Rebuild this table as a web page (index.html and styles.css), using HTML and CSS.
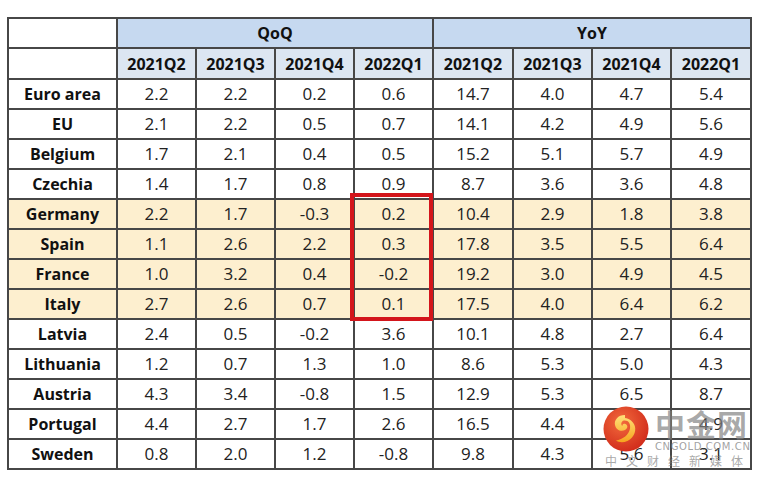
FILE: index.html
```html
<!DOCTYPE html>
<html>
<head>
<meta charset="utf-8">
<link rel="stylesheet" href="styles.css">
</head>
<body>
<div class="wrap">
  <table class="gdp">
    <colgroup>
      <col class="c-label">
      <col class="c79"><col class="c79"><col class="c79"><col class="c79">
      <col class="c80"><col class="c79"><col class="c79"><col class="c80">
    </colgroup>
    <thead>
      <tr class="h1">
        <th class="blank"></th>
        <th colspan="4">QoQ</th>
        <th colspan="4">YoY</th>
      </tr>
      <tr class="h2">
        <th class="blank"></th>
        <th>2021Q2</th><th>2021Q3</th><th>2021Q4</th><th>2022Q1</th>
        <th>2021Q2</th><th>2021Q3</th><th>2021Q4</th><th>2022Q1</th>
      </tr>
    </thead>
    <tbody>
      <tr><th>Euro area</th><td>2.2</td><td>2.2</td><td>0.2</td><td>0.6</td><td>14.7</td><td>4.0</td><td>4.7</td><td>5.4</td></tr>
      <tr><th>EU</th><td>2.1</td><td>2.2</td><td>0.5</td><td>0.7</td><td>14.1</td><td>4.2</td><td>4.9</td><td>5.6</td></tr>
      <tr><th>Belgium</th><td>1.7</td><td>2.1</td><td>0.4</td><td>0.5</td><td>15.2</td><td>5.1</td><td>5.7</td><td>4.9</td></tr>
      <tr><th>Czechia</th><td>1.4</td><td>1.7</td><td>0.8</td><td>0.9</td><td>8.7</td><td>3.6</td><td>3.6</td><td>4.8</td></tr>
      <tr class="hl"><th>Germany</th><td>2.2</td><td>1.7</td><td>-0.3</td><td>0.2</td><td>10.4</td><td>2.9</td><td>1.8</td><td>3.8</td></tr>
      <tr class="hl"><th>Spain</th><td>1.1</td><td>2.6</td><td>2.2</td><td>0.3</td><td>17.8</td><td>3.5</td><td>5.5</td><td>6.4</td></tr>
      <tr class="hl"><th>France</th><td>1.0</td><td>3.2</td><td>0.4</td><td>-0.2</td><td>19.2</td><td>3.0</td><td>4.9</td><td>4.5</td></tr>
      <tr class="hl"><th>Italy</th><td>2.7</td><td>2.6</td><td>0.7</td><td>0.1</td><td>17.5</td><td>4.0</td><td>6.4</td><td>6.2</td></tr>
      <tr><th>Latvia</th><td>2.4</td><td>0.5</td><td>-0.2</td><td>3.6</td><td>10.1</td><td>4.8</td><td>2.7</td><td>6.4</td></tr>
      <tr><th>Lithuania</th><td>1.2</td><td>0.7</td><td>1.3</td><td>1.0</td><td>8.6</td><td>5.3</td><td>5.0</td><td>4.3</td></tr>
      <tr><th>Austria</th><td>4.3</td><td>3.4</td><td>-0.8</td><td>1.5</td><td>12.9</td><td>5.3</td><td>6.5</td><td>8.7</td></tr>
      <tr><th>Portugal</th><td>4.4</td><td>2.7</td><td>1.7</td><td>2.6</td><td>16.5</td><td>4.4</td><td>4.9</td><td>4.9</td></tr>
      <tr><th>Sweden</th><td>0.8</td><td>2.0</td><td>1.2</td><td>-0.8</td><td>9.8</td><td>4.3</td><td>5.6</td><td>3.1</td></tr>
    </tbody>
  </table>
  <div class="redbox"></div>
  <div class="watermark">
    <svg class="wm-logo" width="46" height="46" viewBox="0 0 46 46">
      <defs>
        <radialGradient id="g1" cx="40%" cy="35%" r="70%">
          <stop offset="0" stop-color="#f26a3c"/>
          <stop offset="1" stop-color="#d02a1a"/>
        </radialGradient>
        <linearGradient id="g2" x1="0" y1="0" x2="0" y2="1">
          <stop offset="0" stop-color="#ffe27a"/>
          <stop offset="1" stop-color="#f6a41e"/>
        </linearGradient>
      </defs>
      <circle cx="23" cy="23" r="22.5" fill="url(#g1)"/>
      <path d="M22 9c-7 0-11 5-10 10 1 5 6 7 10 5 3-1.5 3-5 .5-6-2-.8-3.5.6-3 2-2-1-1.5-5 1.5-5.5 4-.6 7 3 6 8-1 6-7 11-14 12 4 3 12 2 16-3 5-6 4-13-1-17-2-1.5-4-2.5-6-2.5z" fill="url(#g2)"/>
    </svg>
    <div class="wm-text">
      <div class="wm-big">中金网</div>
      <div class="wm-url">CNGOLD.COM.CN</div>
    </div>
    <div class="wm-sub">中文财经新媒体</div>
  </div>
</div>
</body>
</html>
```

FILE: styles.css
```css
html, body {
  margin: 0;
  padding: 0;
  background: #ffffff;
}
.wrap {
  position: relative;
  padding: 17px 0 0 7px;
  width: 760px;
  height: 478px;
  box-sizing: border-box;
}
.gdp {
  border-collapse: collapse;
  table-layout: fixed;
  width: 743px;
  font-family: "Open Sans", "Noto Sans", sans-serif;
  color: #1a1a1a;
}
.c-label { width: 109px; }
.c79 { width: 79px; }
.c80 { width: 80px; }
.gdp th, .gdp td {
  border: 2px solid #474747;
  height: 28px;
  padding: 0;
  text-align: center;
  vertical-align: middle;
  line-height: 24px;
}
.gdp th {
  font-size: 16px;
  font-weight: 700;
  color: #111;
}
.gdp td {
  font-size: 17px;
  font-weight: 400;
  color: #222;
}
.h1 th {
  background: #c6d9f0;
  height: 28px;
}
.h2 th {
  background: #dce6f2;
  height: 29px;
}
.gdp th.blank {
  background: #ffffff;
}
.hl th, .hl td {
  background: #fdefcf;
}
.redbox {
  position: absolute;
  left: 350px;
  top: 193px;
  width: 83px;
  height: 128px;
  box-sizing: border-box;
  border: 4px solid #d3151b;
}
.watermark {
  position: absolute;
  left: 603px;
  top: 405px;
  width: 150px;
  height: 70px;
}
.wm-logo {
  position: absolute;
  left: 0;
  top: 1px;
}
.wm-text {
  position: absolute;
  left: 52px;
  top: 0;
}
.wm-big {
  font-family: "Noto Sans CJK SC", sans-serif;
  font-size: 30px;
  font-weight: 700;
  line-height: 36px;
  color: rgba(130, 130, 130, 0.7);
  letter-spacing: 1px;
}
.wm-url {
  font-family: "DejaVu Sans", sans-serif;
  font-size: 10px;
  line-height: 12px;
  letter-spacing: 0.6px;
  color: rgba(130, 130, 130, 0.75);
}
.wm-sub {
  position: absolute;
  left: 2px;
  top: 49px;
  font-family: "Noto Sans CJK SC", sans-serif;
  font-size: 12px;
  line-height: 14px;
  letter-spacing: 9px;
  color: rgba(130, 130, 130, 0.7);
  white-space: nowrap;
}
```
